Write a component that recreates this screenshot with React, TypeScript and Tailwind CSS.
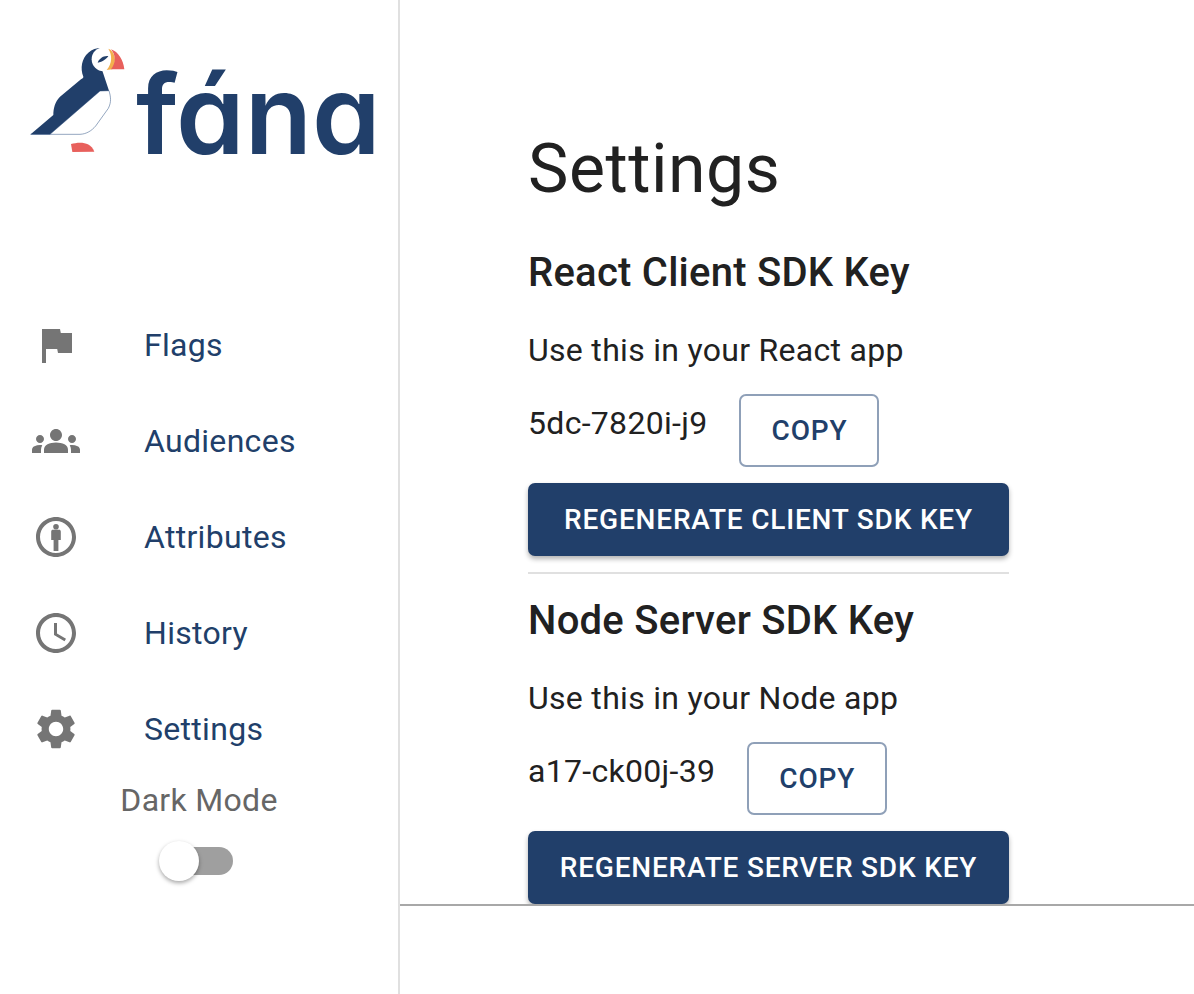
const ROBOTO = "font-['Roboto',sans-serif]"

function Icon({ d }: { d: string }) {
    return (
        <svg viewBox="0 0 24 24" className="h-12 w-12 fill-[#757575]">
            <path d={d} />
        </svg>
    )
}

function AttributesIcon() {
    return (
        <svg viewBox="0 0 24 24" className="h-12 w-12 fill-[#757575]">
            <path
                fillRule="evenodd"
                d="M12 2C6.48 2 2 6.48 2 12s4.48 10 10 10 10-4.48 10-10S17.52 2 12 2zm0 18c-4.42 0-8-3.58-8-8s3.58-8 8-8 8 3.58 8 8-3.58 8-8 8z"
            />
            <circle cx="12" cy="6.9" r="1.4" />
            <path d="M9.6 9.2c0-.5.4-.8.8-.8h3.2c.4 0 .8.3.8.8v4.3h-1.2V19h-2.4v-5.5H9.6z" />
        </svg>
    )
}

const navItems = [
    { label: 'Flags', icon: <Icon d="M14.4 6L14 4H5v17h2v-7h5.6l.4 2h7V6z" /> },
    {
        label: 'Audiences',
        icon: (
            <Icon d="M12 12.75c1.63 0 3.07.39 4.24.9 1.08.48 1.76 1.56 1.76 2.73V18H6v-1.61c0-1.18.68-2.26 1.76-2.73 1.17-.52 2.61-.91 4.24-.91zM4 13c1.1 0 2-.9 2-2s-.9-2-2-2-2 .9-2 2 .9 2 2 2zm1.13 1.1c-.37-.06-.74-.1-1.13-.1-.99 0-1.93.21-2.78.58C.48 14.9 0 15.62 0 16.43V18h4.5v-1.61c0-.83.23-1.61.63-2.29zM20 13c1.1 0 2-.9 2-2s-.9-2-2-2-2 .9-2 2 .9 2 2 2zm4 3.43c0-.81-.48-1.53-1.22-1.85-.85-.37-1.79-.58-2.78-.58-.39 0-.76.04-1.13.1.4.68.63 1.46.63 2.29V18H24v-1.57zM12 6c1.66 0 3 1.34 3 3s-1.34 3-3 3-3-1.34-3-3 1.34-3 3-3z" />
        ),
    },
    { label: 'Attributes', icon: <AttributesIcon /> },
    {
        label: 'History',
        icon: (
            <Icon d="M11.99 2C6.47 2 2 6.48 2 12s4.47 10 9.99 10C17.52 22 22 17.52 22 12S17.52 2 11.99 2zM12 20c-4.42 0-8-3.58-8-8s3.58-8 8-8 8 3.58 8 8-3.58 8-8 8zm.5-13H11v6l5.25 3.15.75-1.23-4.5-2.67z" />
        ),
    },
    {
        label: 'Settings',
        icon: (
            <Icon d="M19.14 12.94c.04-.3.06-.61.06-.94 0-.32-.02-.64-.07-.94l2.03-1.58c.18-.14.23-.41.12-.61l-1.92-3.32c-.12-.22-.37-.29-.59-.22l-2.39.96c-.5-.38-1.03-.7-1.62-.94l-.36-2.54c-.04-.24-.24-.41-.48-.41h-3.84c-.24 0-.43.17-.47.41l-.36 2.54c-.59.24-1.13.57-1.62.94l-2.39-.96c-.22-.08-.47 0-.59.22L2.74 8.87c-.12.21-.08.47.12.61l2.03 1.58c-.05.3-.09.63-.09.94s.02.64.07.94l-2.03 1.58c-.18.14-.23.41-.12.61l1.92 3.32c.12.22.37.29.59.22l2.39-.96c.5.38 1.03.7 1.62.94l.36 2.54c.05.24.24.41.48.41h3.84c.24 0 .44-.17.47-.41l.36-2.54c.59-.24 1.13-.56 1.62-.94l2.39.96c.22.08.47 0 .59-.22l1.92-3.32c.12-.22.07-.47-.12-.61l-2.01-1.58zM12 15.6c-1.98 0-3.6-1.62-3.6-3.6s1.62-3.6 3.6-3.6 3.6 1.62 3.6 3.6-1.62 3.6-3.6 3.6z" />
        ),
    },
]

function Puffin() {
    return (
        <svg viewBox="0 0 330 360" className="h-[120px] w-[110px] shrink-0">
            <path
                d="M17 283 L75 283 L225 153 L252 152 C257 170 260 185 250 205 L212 258 C200 272 185 282 165 283 Z"
                fill="#fff"
                stroke="#5f7aa0"
                strokeWidth="2"
            />
            <path
                d="M17 283 L85 225 C85 205 90 185 105 170 L168 118 C172 114 175 115 175 110 C165 85 170 55 190 38 C205 25 225 22 245 26 L232 92 L252 152 L225 153 L75 283 Z"
                fill="#213f6a"
            />
            <circle cx="236" cy="58" r="36" fill="#fff" />
            <path d="M250 26 C268 32 278 62 262 88 L245 90 C262 70 262 45 250 26 Z" fill="#f3b04e" />
            <path d="M258 28 C280 35 295 60 298 88 L258 88 C274 68 272 45 258 28 Z" fill="#e8605c" />
            <path d="M218 68 C222 55 236 46 250 48 C246 56 232 66 218 68 Z" fill="#213f6a" />
            <path d="M138 312 C160 307 195 302 208 335 L142 336 Z" fill="#e8605c" />
        </svg>
    )
}

function KeySection({
    title,
    hint,
    sdkKey,
    action,
    divider,
}: {
    title: string
    hint: string
    sdkKey: string
    action: string
    divider?: boolean
}) {
    return (
        <section className="w-[481px]">
            <h2 className="text-[40px] font-medium leading-[48px] tracking-[0.25px] whitespace-nowrap text-[#212121]">{title}</h2>
            <p className="mt-[33px] text-[32px] leading-[40px] tracking-[0.3px] whitespace-nowrap text-[#212121]">{hint}</p>
            <div className="mt-[24px] flex items-start gap-[32px]">
                <span className="pt-[9px] text-[32px] leading-[40px] tracking-[0.3px] whitespace-nowrap text-[#212121]">{sdkKey}</span>
                <button className="h-[73px] w-[140px] rounded-[7px] border-2 border-[#8fa0b8] text-[28px] font-medium tracking-[0.8px] text-[#213f6a]">
                    COPY
                </button>
            </div>
            <button className="mt-[16px] h-[73px] w-full rounded-[7px] bg-[#213f6a] text-center text-[28px] font-medium tracking-[0.8px] whitespace-nowrap text-white shadow-[0_3px_5px_rgba(0,0,0,0.3)]">
                {action}
            </button>
            {divider && <div className="mt-[16px] h-[2px] bg-[#e0e0e0]" />}
        </section>
    )
}

export default function App() {
    return (
        <div className={`flex h-[994px] w-[1194px] overflow-hidden bg-white ${ROBOTO}`}>
            {/* Sidebar */}
            <aside className="flex w-[400px] shrink-0 flex-col border-r-2 border-[#e0e0e0]">
                <div className="flex h-[297px] items-start pt-[40px] pl-[25px]">
                    <Puffin />
                    <span className="mt-[9px] ml-[1px] font-['Inter',sans-serif] text-[110px] leading-[130px] font-semibold text-[#213f6a] [font-feature-settings:'cv11']">
                        fána
                    </span>
                </div>
                <nav className="flex flex-col">
                    {navItems.map((item) => (
                        <div key={item.label} className="flex h-24 items-center pl-8">
                            {item.icon}
                            <span className="ml-[64px] text-[32px] tracking-[0.3px] text-[#213f6a]">{item.label}</span>
                        </div>
                    ))}
                </nav>
                <div className="mt-[3px] flex flex-col items-center">
                    <span className="text-[32px] leading-[40px] tracking-[0.3px] text-[#666666]">Dark Mode</span>
                    <div className="relative mt-[27px] ml-[-1px] h-[28px] w-[68px] rounded-full bg-[#9f9f9f]">
                        <div className="absolute top-[-6px] left-[-6px] h-10 w-10 rounded-full bg-white shadow-[0_2px_4px_rgba(0,0,0,0.35)]" />
                    </div>
                </div>
            </aside>

            {/* Main */}
            <main className="flex-1">
                <div className="h-[906px] overflow-hidden border-b-2 border-[#a8a8a8] pl-[128px]">
                    <h1 className="mt-[129px] text-[68px] leading-[80px] tracking-[0.5px] text-[#212121]">Settings</h1>
                    <div className="mt-[40px] flex flex-col gap-[23px]">
                        <KeySection
                            title="React Client SDK Key"
                            hint="Use this in your React app"
                            sdkKey="5dc-7820i-j9"
                            action="REGENERATE CLIENT SDK KEY"
                            divider
                        />
                        <KeySection
                            title="Node Server SDK Key"
                            hint="Use this in your Node app"
                            sdkKey="a17-ck00j-39"
                            action="REGENERATE SERVER SDK KEY"
                        />
                    </div>
                </div>
            </main>
        </div>
    )
}
